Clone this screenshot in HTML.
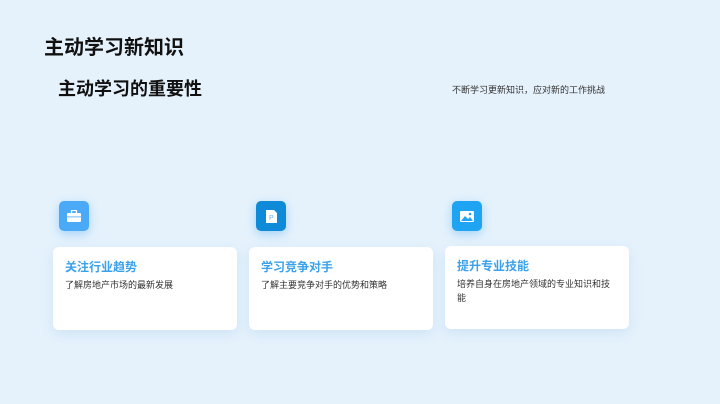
<!DOCTYPE html>
<html><head><meta charset="utf-8"><style>
*{margin:0;padding:0;box-sizing:border-box}
body{width:720px;height:404px;overflow:hidden;background:#e5f2fc;font-family:"Liberation Sans","Noto Sans CJK SC",sans-serif;position:relative;color:#222}
.a{position:absolute;white-space:nowrap}
.h1{left:44px;top:31px;font-size:20px;font-weight:bold;color:#111}
.h2{left:58px;top:75px;font-size:18px;font-weight:bold;color:#111}
.rt{left:452px;top:83px;font-size:9px;color:#333}
.ic{position:absolute;width:30px;height:30px;border-radius:5px;box-shadow:0 3px 10px rgba(40,150,240,.35);display:flex;align-items:center;justify-content:center}
.card{position:absolute;width:184px;height:83px;background:#fff;border-radius:6px;box-shadow:0 4px 12px rgba(120,170,220,.2);padding:11px 12px}
.card b{display:block;font-size:12px;color:#3ba1ea;margin-bottom:3px}
.card p{font-size:9px;color:#333;line-height:14px;white-space:normal}
</style></head><body>
<div class="a h1">主动学习新知识</div>
<div class="a h2">主动学习的重要性</div>
<div class="a rt">不断学习更新知识，应对新的工作挑战</div>

<div class="ic" style="left:59px;top:201px;background:#4aaaf8"><svg width="14" height="12" viewBox="0 0 14 12"><rect x="4.5" y="0.5" width="5" height="3" fill="none" stroke="#fff" stroke-width="1.2"/><rect x="0" y="3" width="14" height="9" rx="1" fill="#fff"/><rect x="0" y="6.5" width="14" height="0.8" fill="#4aaaf8"/></svg></div>
<div class="ic" style="left:256px;top:201px;background:#0f8ad8"><svg width="11" height="13" viewBox="0 0 11 13"><path d="M0 0H8L11 3V13H0Z" fill="#fff"/><text x="3" y="10" font-size="7" fill="#6ab4ea" font-family="Liberation Sans">P</text></svg></div>
<div class="ic" style="left:452px;top:201px;background:#1fa4f4"><svg width="14" height="11" viewBox="0 0 14 11"><rect width="14" height="11" rx="1" fill="#fff"/><path d="M1 10L5 5L8 8L10 6L13 10Z" fill="#1fa4f4"/><circle cx="10" cy="3" r="1.3" fill="#1fa4f4"/></svg></div>

<div class="card" style="left:53px;top:247px"><b>关注行业趋势</b><p>了解房地产市场的最新发展</p></div>
<div class="card" style="left:249px;top:247px"><b>学习竞争对手</b><p>了解主要竞争对手的优势和策略</p></div>
<div class="card" style="left:445px;top:246px"><b>提升专业技能</b><p>培养自身在房地产领域的专业知识和技能</p></div>
</body></html>
